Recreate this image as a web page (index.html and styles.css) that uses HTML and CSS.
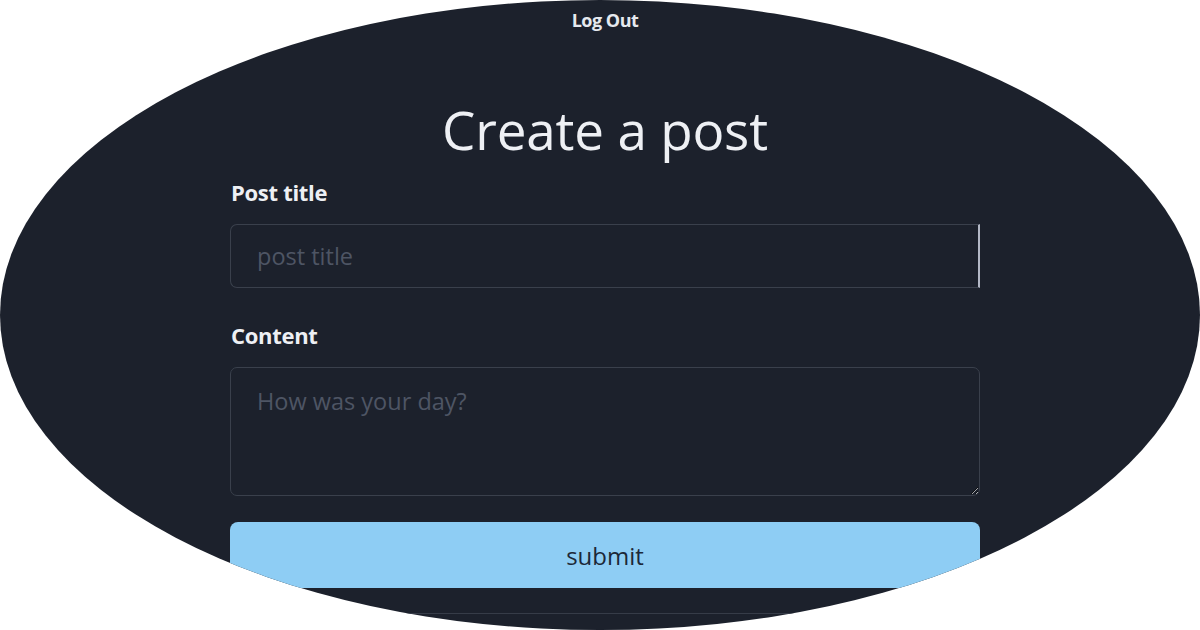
FILE: index.html
```html
<!DOCTYPE html>
<html lang="en">
<head>
    <meta charset="UTF-8">
    <meta name="viewport" content="width=device-width, initial-scale=1.0">
    <title>Create a post</title>
    <link rel="stylesheet" href="styles.css">
</head>
<body>
    <div class="oval">
        <nav class="topbar">
            <a href="#" class="logout">Log Out</a>
        </nav>
        <h1>Create a post</h1>
        <form class="post-form">
            <label for="title">Post title</label>
            <input type="text" id="title" class="field title-field" placeholder="post title">
            <label for="content">Content</label>
            <textarea id="content" class="field" placeholder="How was your day?"></textarea>
            <button type="submit" class="submit">submit</button>
        </form>
        <div class="divider"></div>
    </div>
</body>
</html>
```

FILE: styles.css
```css
body {
    margin: 0;
    padding: 0;
    background: #fff;
    font-family: "Open Sans", "Noto Sans", sans-serif;
}

.oval {
    width: 1200px;
    height: 630px;
    border-radius: 50%;
    overflow: hidden;
    background-color: #1c212c;
    display: flex;
    flex-direction: column;
    align-items: center;
    color: #e6e9ef;
}

.topbar {
    height: 40px;
    display: flex;
    align-items: center;
    justify-content: center;
    padding-left: 10px;
}

.logout {
    color: #e6e9ef;
    text-decoration: none;
    font-weight: 700;
    font-size: 18px;
    letter-spacing: -0.5px;
}

h1 {
    margin: 63px 0 0 10px;
    font-size: 53px;
    font-weight: 400;
    line-height: 1;
    color: #eef0f4;
    letter-spacing: -0.2px;
}

.post-form {
    width: 750px;
    display: flex;
    flex-direction: column;
    margin: 21px 0 0 10px;
}

.post-form label {
    font-size: 22px;
    font-weight: 700;
    letter-spacing: -0.3px;
    color: #eef0f4;
    padding-left: 1px;
    line-height: 30px;
}

.field {
    box-sizing: border-box;
    background-color: #1c212c;
    border: 1px solid #3a404c;
    border-radius: 7px;
    color: #e6e9ef;
    font-family: inherit;
    font-size: 23.5px;
    padding: 0 26px;
    outline: none;
}

.field::placeholder {
    color: #4e5564;
}

.title-field {
    height: 64px;
    margin-top: 17px;
    margin-bottom: 32px;
    border-right: 2px solid #b3b8c6;
    border-radius: 7px 0 0 7px;
}

textarea.field {
    height: 129px;
    margin-top: 17px;
    padding-top: 17px;
    resize: vertical;
}

.submit {
    margin-top: 26px;
    height: 66px;
    border: none;
    border-radius: 8px;
    background-color: #8ecdf4;
    color: #1c2838;
    font-family: inherit;
    font-size: 24px;
    cursor: pointer;
}

.divider {
    width: 750px;
    margin: 25px 0 0 10px;
    border-top: 1px solid #363c48;
}
```
